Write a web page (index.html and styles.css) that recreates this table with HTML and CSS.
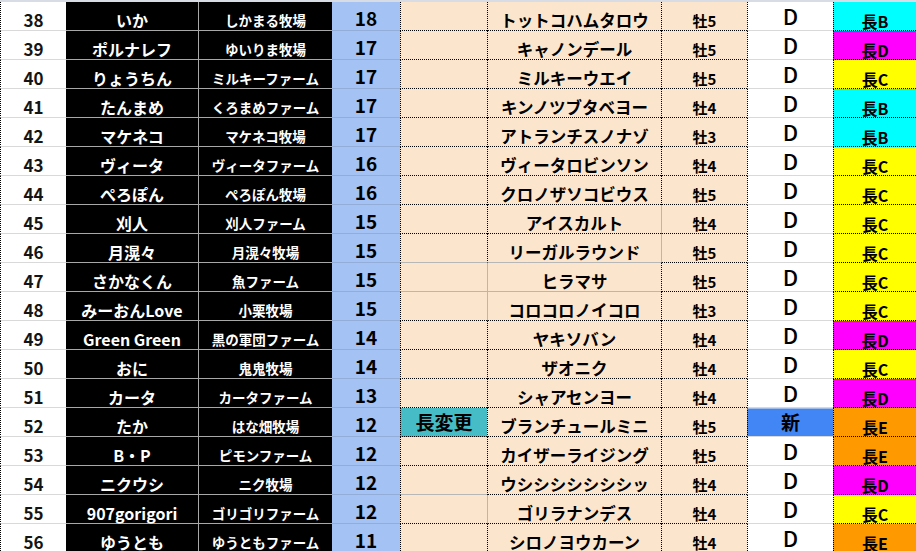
FILE: index.html
```html
<!DOCTYPE html>
<html lang="ja">
<head>
<meta charset="utf-8">
<title>一覧</title>
<link rel="stylesheet" href="styles.css">
</head>
<body>
<div class="sheet">
  <div class="row"><div class="c a">38</div><div class="c b">いか</div><div class="c cf">しかまる牧場</div><div class="c d">18</div><div class="c e"></div><div class="c f">トットコハムタロウ</div><div class="c g">牡5</div><div class="c h">D</div><div class="c i cy">長B</div></div>
  <div class="row"><div class="c a">39</div><div class="c b">ポルナレフ</div><div class="c cf">ゆいりま牧場</div><div class="c d">17</div><div class="c e"></div><div class="c f">キャノンデール</div><div class="c g">牡5</div><div class="c h">D</div><div class="c i mg">長D</div></div>
  <div class="row"><div class="c a">40</div><div class="c b">りょうちん</div><div class="c cf">ミルキーファーム</div><div class="c d">17</div><div class="c e"></div><div class="c f">ミルキーウエイ</div><div class="c g">牡5</div><div class="c h">D</div><div class="c i ye">長C</div></div>
  <div class="row"><div class="c a">41</div><div class="c b">たんまめ</div><div class="c cf">くろまめファーム</div><div class="c d">17</div><div class="c e"></div><div class="c f">キンノツブタベヨー</div><div class="c g">牡4</div><div class="c h">D</div><div class="c i cy">長B</div></div>
  <div class="row"><div class="c a">42</div><div class="c b">マケネコ</div><div class="c cf">マケネコ牧場</div><div class="c d">17</div><div class="c e"></div><div class="c f">アトランチスノナゾ</div><div class="c g">牡3</div><div class="c h">D</div><div class="c i cy">長B</div></div>
  <div class="row"><div class="c a">43</div><div class="c b">ヴィータ</div><div class="c cf">ヴィータファーム</div><div class="c d">16</div><div class="c e"></div><div class="c f">ヴィータロビンソン</div><div class="c g">牡4</div><div class="c h">D</div><div class="c i ye">長C</div></div>
  <div class="row"><div class="c a">44</div><div class="c b">ぺろぽん</div><div class="c cf">ぺろぽん牧場</div><div class="c d">16</div><div class="c e"></div><div class="c f">クロノザソコビウス</div><div class="c g">牡5</div><div class="c h">D</div><div class="c i ye">長C</div></div>
  <div class="row"><div class="c a">45</div><div class="c b">刈人</div><div class="c cf">刈人ファーム</div><div class="c d">15</div><div class="c e"></div><div class="c f">アイスカルト</div><div class="c g gl">牡4</div><div class="c h">D</div><div class="c i ye">長C</div></div>
  <div class="row"><div class="c a">46</div><div class="c b">月滉々</div><div class="c cf">月滉々牧場</div><div class="c d">15</div><div class="c e gb"></div><div class="c f gb">リーガルラウンド</div><div class="c g gl">牡5</div><div class="c h">D</div><div class="c i ye">長C</div></div>
  <div class="row"><div class="c a">47</div><div class="c b">さかなくん</div><div class="c cf">魚ファーム</div><div class="c d">15</div><div class="c e gb"></div><div class="c f gb gl">ヒラマサ</div><div class="c g">牡5</div><div class="c h">D</div><div class="c i ye">長C</div></div>
  <div class="row"><div class="c a">48</div><div class="c b">みーおんLove</div><div class="c cf">小栗牧場</div><div class="c d">15</div><div class="c e"></div><div class="c f gl">コロコロノイコロ</div><div class="c g">牡3</div><div class="c h">D</div><div class="c i ye">長C</div></div>
  <div class="row"><div class="c a">49</div><div class="c b">Green Green</div><div class="c cf">黒の軍団ファーム</div><div class="c d">14</div><div class="c e"></div><div class="c f">ヤキソバン</div><div class="c g">牡4</div><div class="c h">D</div><div class="c i mg">長D</div></div>
  <div class="row"><div class="c a">50</div><div class="c b">おに</div><div class="c cf">鬼鬼牧場</div><div class="c d">14</div><div class="c e"></div><div class="c f">ザオニク</div><div class="c g">牡4</div><div class="c h">D</div><div class="c i ye">長C</div></div>
  <div class="row"><div class="c a">51</div><div class="c b">カータ</div><div class="c cf">カータファーム</div><div class="c d">13</div><div class="c e"></div><div class="c f">シャアセンヨー</div><div class="c g">牡4</div><div class="c h">D</div><div class="c i mg">長D</div></div>
  <div class="row"><div class="c a">52</div><div class="c b">たか</div><div class="c cf">はな畑牧場</div><div class="c d">12</div><div class="c e teal">長変更</div><div class="c f">ブランチュールミニ</div><div class="c g">牡5</div><div class="c h new">新</div><div class="c i or">長E</div></div>
  <div class="row"><div class="c a">53</div><div class="c b">B・P</div><div class="c cf">ピモンファーム</div><div class="c d">12</div><div class="c e"></div><div class="c f">カイザーライジング</div><div class="c g">牡5</div><div class="c h">D</div><div class="c i or">長E</div></div>
  <div class="row"><div class="c a">54</div><div class="c b">ニクウシ</div><div class="c cf">ニク牧場</div><div class="c d">12</div><div class="c e gb"></div><div class="c f">ウシシシシシシシッ</div><div class="c g">牡4</div><div class="c h">D</div><div class="c i mg">長D</div></div>
  <div class="row"><div class="c a">55</div><div class="c b">907gorigori</div><div class="c cf">ゴリゴリファーム</div><div class="c d">12</div><div class="c e"></div><div class="c f gl">ゴリラナンデス</div><div class="c g">牡4</div><div class="c h">D</div><div class="c i ye">長C</div></div>
  <div class="row"><div class="c a">56</div><div class="c b">ゆうとも</div><div class="c cf">ゆうともファーム</div><div class="c d">11</div><div class="c e"></div><div class="c f">シロノヨウカーン</div><div class="c g">牡4</div><div class="c h">D</div><div class="c i or">長E</div></div>
</div>
</body>
</html>
```
FILE: styles.css
```css
html, body {
  margin: 0;
  padding: 0;
  background: #ffffff;
}
body {
  width: 916px;
  height: 551px;
  overflow: hidden;
  font-family: "Noto Sans CJK JP", "Noto Sans", sans-serif;
  font-weight: 700;
  color: #000;
}
.sheet {
  border-top: 2px solid #d7dce5;
}
.row {
  display: grid;
  grid-template-columns: 66px 133px 133px 68px 87px 174px 86px 86px 1fr;
  height: 29px;
}
.c {
  box-sizing: border-box;
  display: flex;
  justify-content: center;
  align-items: flex-end;
  padding-bottom: 2px;
  line-height: 1;
  white-space: nowrap;
  border-bottom: 1px solid #d9d9d9;
}
.a {
  border-left: 1px dotted #000;
  font-size: 17px;
  color: #141414;
}
.b {
  background: #000;
  color: #fff;
  font-size: 16px;
  border-bottom-color: #a8a8a8;
  border-right: 1px solid #a8a8a8;
}
.cf {
  background: #000;
  color: #fff;
  font-size: 13.5px;
  border-bottom-color: #a8a8a8;
  padding-bottom: 3px;
}
.d {
  background: #a4c2f4;
  font-size: 19px;
  border-bottom-color: #93acd8;
  padding-bottom: 3px;
}
.e, .f, .g {
  background: #fce5cd;
  border-left: 1px dotted #000;
  border-bottom: 1px dotted #000;
}
.f {
  font-size: 16.5px;
}
.g {
  font-size: 15px;
}
.h {
  border-left: 1px dotted #000;
  font-size: 22px;
  font-weight: 500;
  align-items: flex-start;
  padding-top: 2px;
  padding-bottom: 0;
}
.i {
  border-left: 1px dotted #000;
  border-bottom: 1px dotted #000;
  font-size: 16px;
  padding-bottom: 1px;
}
.gb {
  border-bottom: 1px solid #b7b7b7;
}
.gl {
  border-left: 1px solid #b7b7b7;
}
.teal {
  background: #46bdc6;
  font-size: 19px;
  align-items: center;
  padding-bottom: 1px;
}
.new {
  background: #4285f4;
  border-top: 1px solid #9fbbe8;
  font-size: 19px;
  font-weight: 700;
  align-items: center;
  padding-top: 0;
  padding-bottom: 2px;
}
.cy { background: #00ffff; }
.mg { background: #ff00ff; }
.ye { background: #ffff00; }
.or { background: #ff9900; }
```
